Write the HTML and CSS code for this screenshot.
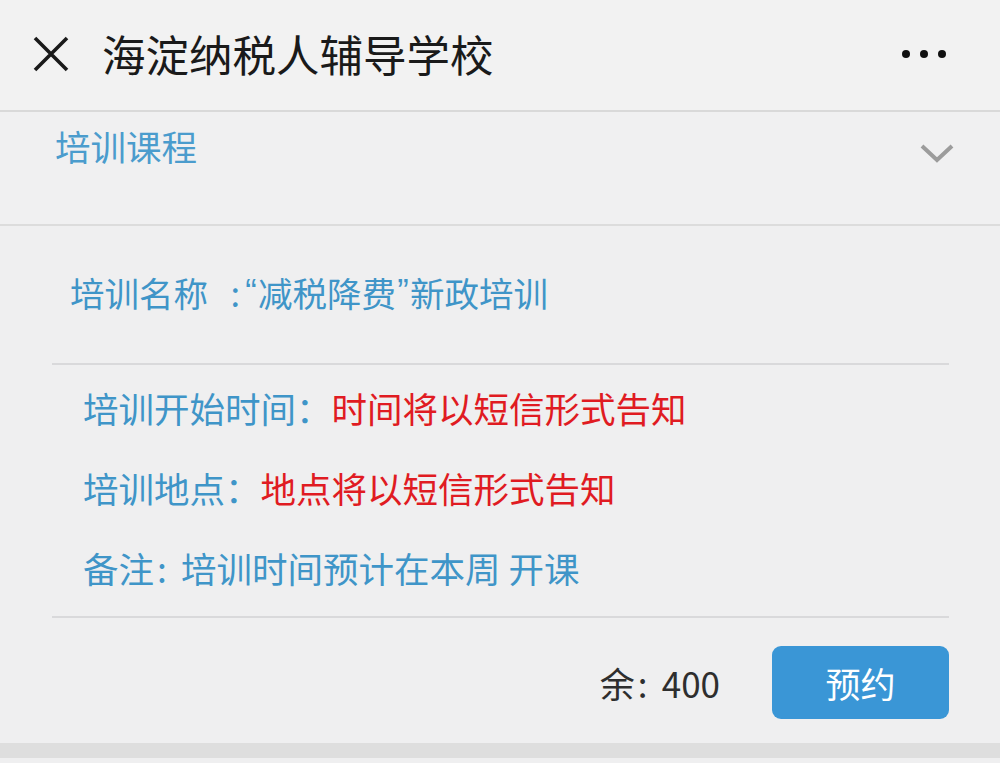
FILE: index.html
```html
<!DOCTYPE html>
<html lang="zh-CN">
<head>
<meta charset="utf-8">
<title>海淀纳税人辅导学校</title>
<link rel="stylesheet" href="styles.css">
</head>
<body>
<header class="topbar">
  <svg class="close" width="36" height="36" viewBox="0 0 36 36"><path d="M2 2 L34 34 M34 2 L2 34" stroke="#1a1a1a" stroke-width="3.6" fill="none"/></svg>
  <h1 class="title">海淀纳税人辅导学校</h1>
  <div class="more"><span></span><span></span><span></span></div>
</header>
<section class="section-head">
  <span class="section-title">培训课程</span>
  <svg class="chevron" width="34" height="22" viewBox="0 0 34 22"><path d="M2 3 L17 17 L32 3" stroke="#9c9c9c" stroke-width="4" fill="none"/></svg>
</section>
<main class="course">
  <div class="name-row">培训名称<span class="colon-wide">:</span><span class="q">“</span>减税降费<span class="q">”</span>新政培训</div>
  <div class="details">
    <div class="row">培训开始时间：<span class="red">时间将以短信形式告知</span></div>
    <div class="row">培训地点：<span class="red">地点将以短信形式告知</span></div>
    <div class="row">备注<span class="colon">:</span>培训时间预计在本周 开课</div>
  </div>
  <div class="footer">
    <span class="remain">余<span class="colon">:</span>400</span>
    <button class="book">预约</button>
  </div>
</main>
<div class="strip"></div>
</body>
</html>
```
FILE: styles.css
```css
* { box-sizing: border-box; }
html, body { margin: 0; padding: 0; }
body {
  width: 1000px;
  height: 763px;
  overflow: hidden;
  background: #efeff0;
  font-family: "Noto Sans CJK SC", "Noto Sans", sans-serif;
}
.topbar {
  height: 112px;
  background: #f2f2f2;
  border-bottom: 2px solid #d9d9d9;
  display: flex;
  align-items: center;
  padding: 0 54px 2px 33px;
}
.close { flex: none; }
.title {
  margin: 0 0 0 33px;
  font-size: 43.5px;
  font-weight: 400;
  color: #1a1a1a;
  flex: 1;
  line-height: 1;
}
.more { display: flex; gap: 10px; }
.more span {
  width: 8px; height: 8px; border-radius: 50%; background: #111;
}
.section-head {
  height: 114px;
  border-bottom: 2px solid #dcdcdc;
  display: flex;
  justify-content: space-between;
  padding: 14px 46px 0 55px;
  background: #f0f0f1;
}
.section-title {
  font-size: 35.5px;
  color: #4b9ccd;
  line-height: 40px;
}
.chevron { margin-top: 17px; }
.course { padding: 0 51px 0 52px; }
.name-row {
  height: 139px;
  display: flex;
  align-items: center;
  padding: 0 0 6px 18px;
  font-size: 34.5px;
  color: #3f95c8;
  border-bottom: 2px solid #d9d9db;
}
.colon-wide {
  display: inline-block;
  width: 36px;
  text-align: right;
  padding-right: 4px;
}
.q {
  font-family: "Liberation Sans", sans-serif;
  display: inline-block;
  width: 14px;
  text-align: center;
}
.colon {
  display: inline-block;
  width: 27px;
  text-align: left;
  padding-left: 3px;
}
.details {
  padding: 3px 0 8px 31px;
  border-bottom: 2px solid #d9d9db;
}
.row {
  height: 80px;
  line-height: 80px;
  font-size: 35.5px;
  color: #3f95c8;
}
.red { color: #e01b22; }
.footer {
  height: 125px;
  display: flex;
  align-items: center;
  justify-content: flex-end;
  padding-top: 4px;
}
.remain {
  font-size: 35px;
  color: #2e2e2e;
  margin-right: 52px;
}
.book {
  width: 177px;
  height: 73px;
  border: none;
  border-radius: 9px;
  background: #3a96d6;
  color: #fff;
  font-family: inherit;
  font-size: 35px;
  padding: 0;
}
.strip {
  height: 15px;
  background: #dedede;
}
```
